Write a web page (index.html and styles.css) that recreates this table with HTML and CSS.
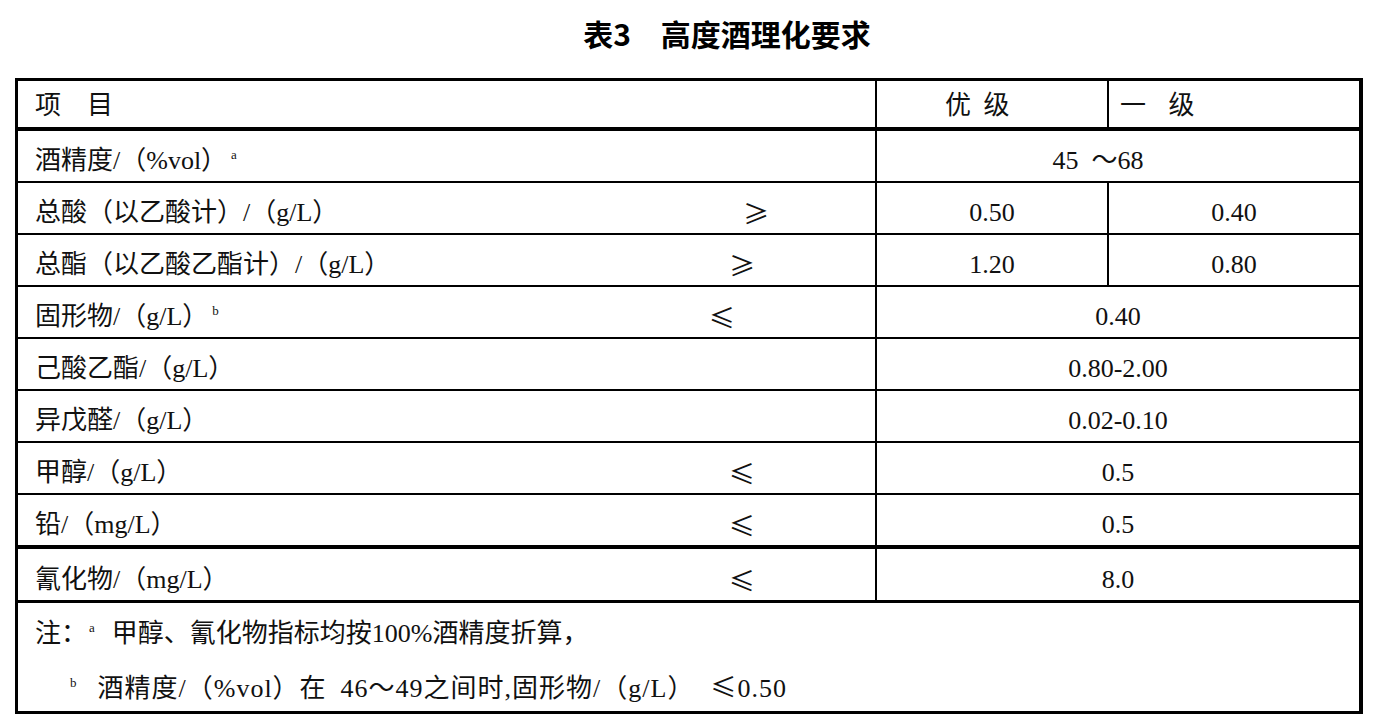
FILE: index.html
```html
<!DOCTYPE html>
<html lang="zh-CN">
<head>
<meta charset="utf-8">
<title>表3 高度酒理化要求</title>
<link rel="stylesheet" href="styles.css">
</head>
<body>
<h1 class="title">表3　高度酒理化要求</h1>
<div class="tbl">
  <div class="row head">
    <div class="c1">项　目</div>
    <div class="c2 hl">优 级</div>
    <div class="c3 hl2">一 级</div>
  </div>
  <div class="row">
    <div class="c1"><span class="lbl">酒精度/（%vol）<sup class="fn">a</sup></span></div>
    <div class="cm shift">45 ～68</div>
  </div>
  <div class="row">
    <div class="c1"><span class="lbl">总酸（以乙酸计）/（g/L）</span><span class="sym far">≥</span></div>
    <div class="c2">0.50</div>
    <div class="c3">0.40</div>
  </div>
  <div class="row">
    <div class="c1"><span class="lbl">总酯（以乙酸乙酯计）/（g/L）</span><span class="sym">≥</span></div>
    <div class="c2">1.20</div>
    <div class="c3">0.80</div>
  </div>
  <div class="row">
    <div class="c1"><span class="lbl">固形物/（g/L）<sup class="fn">b</sup></span><span class="sym near">≤</span></div>
    <div class="cm">0.40</div>
  </div>
  <div class="row">
    <div class="c1"><span class="lbl">己酸乙酯/（g/L）</span></div>
    <div class="cm">0.80-2.00</div>
  </div>
  <div class="row">
    <div class="c1"><span class="lbl">异戊醛/（g/L）</span></div>
    <div class="cm">0.02-0.10</div>
  </div>
  <div class="row">
    <div class="c1"><span class="lbl">甲醇/（g/L）</span><span class="sym">≤</span></div>
    <div class="cm">0.5</div>
  </div>
  <div class="row thick">
    <div class="c1"><span class="lbl">铅/（mg/L）</span><span class="sym">≤</span></div>
    <div class="cm">0.5</div>
  </div>
  <div class="row last">
    <div class="c1"><span class="lbl">氰化物/（mg/L）</span><span class="sym">≤</span></div>
    <div class="cm">8.0</div>
  </div>
  <div class="note">
    <p class="nl">注：<sup class="fn">a</sup> 甲醇、氰化物指标均按100%酒精度折算，</p>
    <p class="nl indent"><sup class="fn">b</sup> 酒精度/（%vol）在 46～49之间时,固形物/（g/L） <span class="le">≤</span>0.50</p>
  </div>
</div>
</body>
</html>
```
FILE: styles.css
```css
html, body {
  margin: 0;
  padding: 0;
  background: #fff;
}
body {
  font-family: "Liberation Serif", "Noto Sans CJK SC", serif;
  color: #111;
  width: 1378px;
}
.title {
  margin: 0;
  padding: 18px 0 0 76px;
  height: 60px;
  box-sizing: border-box;
  text-align: center;
  font-family: "Noto Sans CJK SC", sans-serif;
  font-weight: 700;
  font-size: 30px;
  line-height: 30px;
  color: #000;
}
.tbl {
  margin-left: 15px;
  margin-top: 18px;
  width: 1348px;
  box-sizing: border-box;
  border-top: 3px solid #000;
  border-left: 3px solid #000;
  border-right: 4px solid #000;
  border-bottom: 3px solid #000;
}
.row {
  display: grid;
  grid-template-columns: 857px 232px 252px;
  height: 52px;
  box-sizing: border-box;
  border-bottom: 2px solid #000;
  font-size: 26px;
  line-height: 26px;
}
.row.head {
  height: 50px;
  border-bottom-width: 4px;
}
.row.thick {
  height: 54px;
  border-bottom-width: 4px;
}
.row.last {
  height: 54px;
  border-bottom-width: 3px;
}
.c1, .c2, .c3, .cm {
  box-sizing: border-box;
  padding-top: 17px;
  white-space: nowrap;
}
.head > div { padding-top: 12px; }
.row.last > div { padding-top: 18px; }
.c1 {
  padding-left: 17px;
  display: grid;
  grid-template-columns: 674px auto;
  align-items: start;
}
.c2, .c3, .cm {
  border-left: 2px solid #000;
  text-align: center;
}
.cm { grid-column: 2 / 4; }
.cm.shift { padding-right: 40px; word-spacing: 6.5px; }
.hl { text-align: left; padding-left: 68px; word-spacing: 6px; }
.hl2 { text-align: left; padding-left: 11px; word-spacing: 16px; }
.sym {
  font-family: "Noto Sans CJK SC", sans-serif;
  padding-left: 20px;
}
.sym.far { padding-left: 34px; }
.sym.near { padding-left: 0; }
.fn {
  font-size: 13px;
  line-height: 0;
  vertical-align: 10px;
  margin-left: 4px;
}
.note {
  height: 108px;
  box-sizing: border-box;
  padding: 5px 0 0 17px;
  font-size: 26px;
  line-height: 52px;
}
.nl { margin: 0; white-space: nowrap; word-spacing: 6.5px; }
.nl .fn { margin-left: 2px; margin-right: 4px; }
.indent { padding-left: 35px; letter-spacing: 1px; }
.indent .fn { margin-left: 0; margin-right: 6px; }
.le {
  font-family: "Noto Sans CJK SC", sans-serif;
  margin-left: 2px;
}
```
